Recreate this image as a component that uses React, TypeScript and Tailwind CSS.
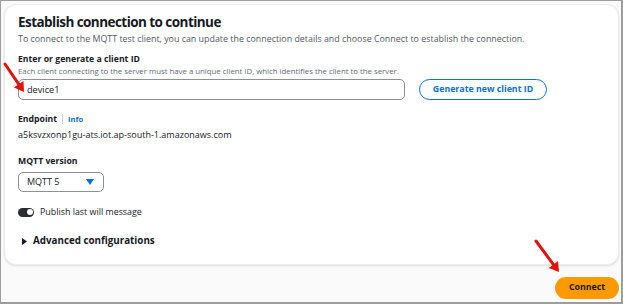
import React from "react";

const RedArrow = ({ x1, y1, x2, y2 }: { x1: number; y1: number; x2: number; y2: number }) => {
  const a = Math.atan2(y2 - y1, x2 - x1);
  const l = 11;
  const w = 0.55;
  const p1 = `${x2 - l * Math.cos(a - w)},${y2 - l * Math.sin(a - w)}`;
  const p2 = `${x2 - l * Math.cos(a + w)},${y2 - l * Math.sin(a + w)}`;
  return (
    <svg className="absolute left-0 top-0 pointer-events-none" width="623" height="304" viewBox="0 0 623 304">
      <line x1={x1} y1={y1} x2={x2 - 4 * Math.cos(a)} y2={y2 - 4 * Math.sin(a)} stroke="#e3120b" strokeWidth="3" strokeLinecap="round" />
      <polygon points={`${x2},${y2} ${p1} ${p2}`} fill="#e3120b" />
    </svg>
  );
};

export default function App() {
  return (
    <div
      className="relative w-[623px] h-[304px] bg-[#fafafa] border border-[#9d9d9d] border-r-2 border-b-2 overflow-hidden"
      style={{ fontFamily: "'Open Sans', 'Noto Sans', sans-serif" }}
    >
      <div className="flex flex-col h-full pt-[3px] pl-[3px] pr-[2px]">
        {/* Card */}
        <div className="h-[261px] bg-white rounded-[12px] border border-[#e9ebed] shadow-[0_1px_2px_rgba(0,0,0,0.12)] pl-[13px] pr-4 pt-[7px]">
          <h2 className="text-[13.5px] font-bold text-[#16191f] leading-[20px] tracking-[-0.55px]">
            Establish connection to continue
          </h2>
          <p className="mt-[1px] text-[8.9px] text-[#545b64] leading-[12px] whitespace-nowrap">
            To connect to the MQTT test client, you can update the connection details and choose Connect to establish the connection.
          </p>

          <div className="mt-[8px] text-[8.7px] font-bold text-[#16191f] leading-[12px]">Enter or generate a client ID</div>
          <div className="text-[7.8px] text-[#5f6b7a] leading-[12px] whitespace-nowrap">
            Each client connecting to the server must have a unique client ID, which identifies the client to the server.
          </div>
          <div className="flex items-center gap-[14px] mt-[2px]">
            <div className="w-[387px] h-[21px] rounded-[5px] border border-[#8d9096] flex items-center pl-[8px] text-[9.2px] text-[#16191f]">
              device1
            </div>
            <button className="h-[21px] w-[128px] rounded-full border-[1.5px] border-[#0972d3] text-[#0972d3] text-[8.8px] font-bold flex items-center justify-center">
              Generate new client ID
            </button>
          </div>

          <div className="mt-[13px] flex items-center leading-[12px]">
            <span className="text-[8.7px] font-bold text-[#16191f]">Endpoint</span>
            <span className="mx-[5px] h-[10px] w-px bg-[#d1d5db]" />
            <span className="text-[#0972d3] font-bold text-[7.5px]">Info</span>
          </div>
          <div className="mt-[4px] text-[9px] text-[#16191f] leading-[12px]">
            a5ksvzxonp1gu-ats.iot.ap-south-1.amazonaws.com
          </div>

          <div className="mt-[14px] text-[8.7px] font-bold text-[#16191f] leading-[12px]">MQTT version</div>
          <div className="mt-[5px] w-[86px] h-[20px] rounded-[5px] border border-[#8d9096] flex items-center justify-between pl-[8px] pr-[9px] text-[9px] text-[#16191f]">
            <span>MQTT 5</span>
            <svg width="8" height="6" viewBox="0 0 8 6">
              <polygon points="0,0 8,0 4,6" fill="#0972d3" />
            </svg>
          </div>

          <div className="mt-[14px] flex items-center gap-[6px] leading-[12px]">
            <div className="w-[16px] h-[9px] rounded-full bg-[#2a2e33] relative">
              <div className="absolute right-[1.5px] top-[1.5px] w-[6px] h-[6px] rounded-full bg-white" />
            </div>
            <span className="text-[8.9px] text-[#16191f]">Publish last will message</span>
          </div>

          <div className="mt-[16px] flex items-center gap-[6px] pl-[4px] leading-[14px]">
            <svg width="5" height="7" viewBox="0 0 5 7">
              <polygon points="0,0 5,3.5 0,7" fill="#16191f" />
            </svg>
            <span className="text-[9.8px] font-bold text-[#16191f]">Advanced configurations</span>
          </div>
        </div>

        {/* Footer */}
        <div className="flex justify-end mt-[12px]">
          <button className="w-[64px] h-[22px] rounded-full bg-[#ff9900] text-[#16191f] text-[8.8px] font-bold flex items-center justify-center">
            Connect
          </button>
        </div>
      </div>

      <RedArrow x1={4} y1={63} x2={23} y2={91} />
      <RedArrow x1={535} y1={240} x2={558} y2={271} />
    </div>
  );
}
